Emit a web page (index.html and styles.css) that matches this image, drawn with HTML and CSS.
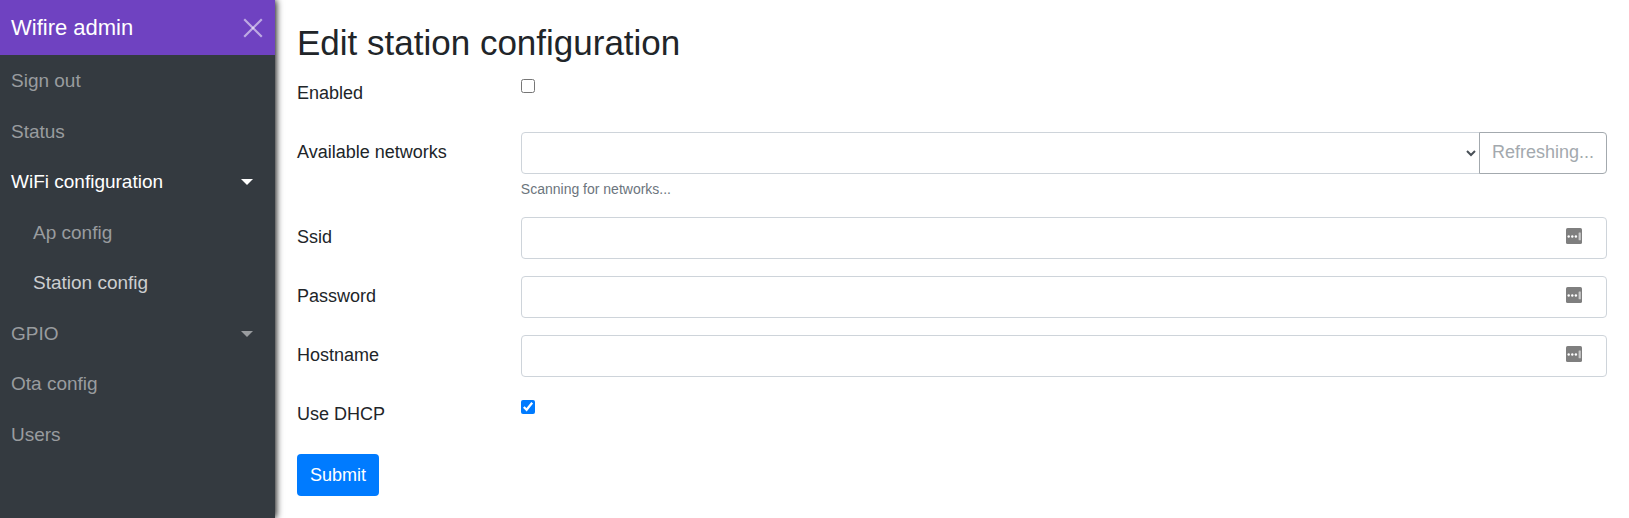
FILE: index.html
```html
<!DOCTYPE html>
<html lang="en">
<head>
<meta charset="utf-8">
<title>Wifire admin</title>
<link rel="stylesheet" href="styles.css">
</head>
<body>
<svg class="sprite" aria-hidden="true">
  <symbol id="key-fill" viewBox="0 0 16 16">
    <rect width="16" height="16" rx="1.6" fill="#7f7f7f"/>
    <g fill="#fff">
      <circle cx="2.7" cy="8.5" r="1.2"/>
      <circle cx="6.3" cy="8.5" r="1.2"/>
      <circle cx="9.9" cy="8.5" r="1.2"/>
      <rect x="12.6" y="4.5" width="2.2" height="7.8" rx=".5" opacity=".6"/>
    </g>
  </symbol>
</svg>
<div class="layout">
  <aside class="sidebar">
    <header class="sidebar-header">
      <a class="brand" href="#">Wifire admin</a>
      <button class="close" type="button" aria-label="Close menu">
        <svg width="20" height="20" viewBox="0 0 20 20" stroke="#fff" stroke-opacity=".55" stroke-width="2.2" aria-hidden="true">
          <path d="M1.2 1.2 18.8 18.8"/>
          <path d="M18.8 1.2 1.2 18.8"/>
        </svg>
      </button>
    </header>
    <nav class="menu">
      <a class="menu-item" href="#">Sign out</a>
      <a class="menu-item" href="#">Status</a>
      <a class="menu-item open" href="#">WiFi configuration<span class="caret"></span></a>
      <a class="menu-item sub" href="#">Ap config</a>
      <a class="menu-item sub current" href="#">Station config</a>
      <a class="menu-item" href="#">GPIO<span class="caret"></span></a>
      <a class="menu-item" href="#">Ota config</a>
      <a class="menu-item" href="#">Users</a>
    </nav>
  </aside>
  <main class="content">
    <h1 class="title">Edit station configuration</h1>
    <form class="form">
      <div class="row">
        <label class="label" for="enabled">Enabled</label>
        <div class="field"><input class="check" type="checkbox" id="enabled"></div>
      </div>
      <div class="row">
        <label class="label" for="networks">Available networks</label>
        <div class="field">
          <div class="group">
            <select class="control select" id="networks"><option></option></select>
            <button class="refresh" type="button" disabled>Refreshing...</button>
          </div>
          <small class="help">Scanning for networks...</small>
        </div>
      </div>
      <div class="row">
        <label class="label" for="ssid">Ssid</label>
        <div class="field">
          <input class="control" type="text" id="ssid">
          <svg class="key" aria-hidden="true"><use href="#key-fill"/></svg>
        </div>
      </div>
      <div class="row">
        <label class="label" for="password">Password</label>
        <div class="field">
          <input class="control" type="password" id="password">
          <svg class="key" aria-hidden="true"><use href="#key-fill"/></svg>
        </div>
      </div>
      <div class="row">
        <label class="label" for="hostname">Hostname</label>
        <div class="field">
          <input class="control" type="text" id="hostname">
          <svg class="key" aria-hidden="true"><use href="#key-fill"/></svg>
        </div>
      </div>
      <div class="row">
        <label class="label" for="dhcp">Use DHCP</label>
        <div class="field"><input class="check" type="checkbox" id="dhcp" checked></div>
      </div>
      <button class="submit" type="submit">Submit</button>
    </form>
  </main>
</div>
</body>
</html>
```
FILE: styles.css
```css
*, *::before, *::after {
  box-sizing: border-box;
}

body {
  margin: 0;
  background: #fff;
  color: #212529;
  font-family: "Liberation Sans", Arial, sans-serif;
  font-size: 18px;
  line-height: 26px;
}

button, input, select {
  font: inherit;
}

.sprite {
  display: none;
}

.layout {
  display: flex;
  min-height: 100vh;
}

.sidebar {
  flex: 0 0 275px;
  background: #343a40;
  box-shadow: 1px 0 7px #000;
}

.sidebar-header {
  display: flex;
  align-items: center;
  justify-content: space-between;
  height: 55px;
  padding: 0 12px 0 11px;
  background: #6f42c1;
}

.brand {
  color: #fff;
  font-size: 22px;
  text-decoration: none;
}

.close {
  display: flex;
  padding: 0;
  border: 0;
  background: none;
}

.menu {
  display: flex;
  flex-direction: column;
  padding-top: 1px;
}

.menu-item {
  display: flex;
  align-items: center;
  justify-content: space-between;
  padding: 11px 22px 11px 11px;
  color: #999c9f;
  font-size: 19px;
  line-height: 1.5;
  text-decoration: none;
}

.menu-item.sub {
  padding-left: 33px;
}

.menu-item.current {
  color: #ccced0;
}

.menu-item.open {
  color: #fff;
}

.caret {
  border: 6px solid transparent;
  border-top-color: currentColor;
  border-bottom: 0;
}

.content {
  flex: 1;
  min-width: 0;
  padding: 22px;
}

.title {
  margin: 0 0 9px;
  font-size: 35px;
  font-weight: 500;
  line-height: 42px;
}

.form {
  display: flex;
  flex-direction: column;
  align-items: stretch;
  gap: 17px;
}

.row {
  display: grid;
  grid-template-columns: repeat(12, 1fr);
  column-gap: 33px;
}

.label {
  grid-column: span 2;
  padding: 7px 0 9px;
  white-space: nowrap;
}

.field {
  position: relative;
  grid-column: span 10;
}

.check {
  display: block;
  width: 14px;
  height: 14px;
  margin: 6px 0 0;
  accent-color: #007bff;
}

.control {
  display: block;
  width: 100%;
  height: 42px;
  padding: 7px 13px;
  border: 1px solid #ced4da;
  border-radius: 4px;
  background: #fff;
  color: #495057;
}

.group {
  display: flex;
}

.select {
  flex: 1;
  min-width: 0;
  border-top-right-radius: 0;
  border-bottom-right-radius: 0;
}

.refresh {
  height: 42px;
  margin-left: -1px;
  padding: 0 12px 2px;
  border: 1px solid #a3a9ae;
  border-radius: 0 4px 4px 0;
  background: #fff;
  color: #a3a9ae;
}

.help {
  display: block;
  margin-top: 4px;
  color: #6c757d;
  font-size: 14px;
  line-height: 22px;
}

.key {
  position: absolute;
  top: 11px;
  right: 25px;
  width: 16px;
  height: 16px;
}

.submit {
  align-self: flex-start;
  height: 42px;
  margin-top: 1px;
  padding: 0 13px;
  border: 0;
  border-radius: 4px;
  background: #007bff;
  color: #fff;
}
```
